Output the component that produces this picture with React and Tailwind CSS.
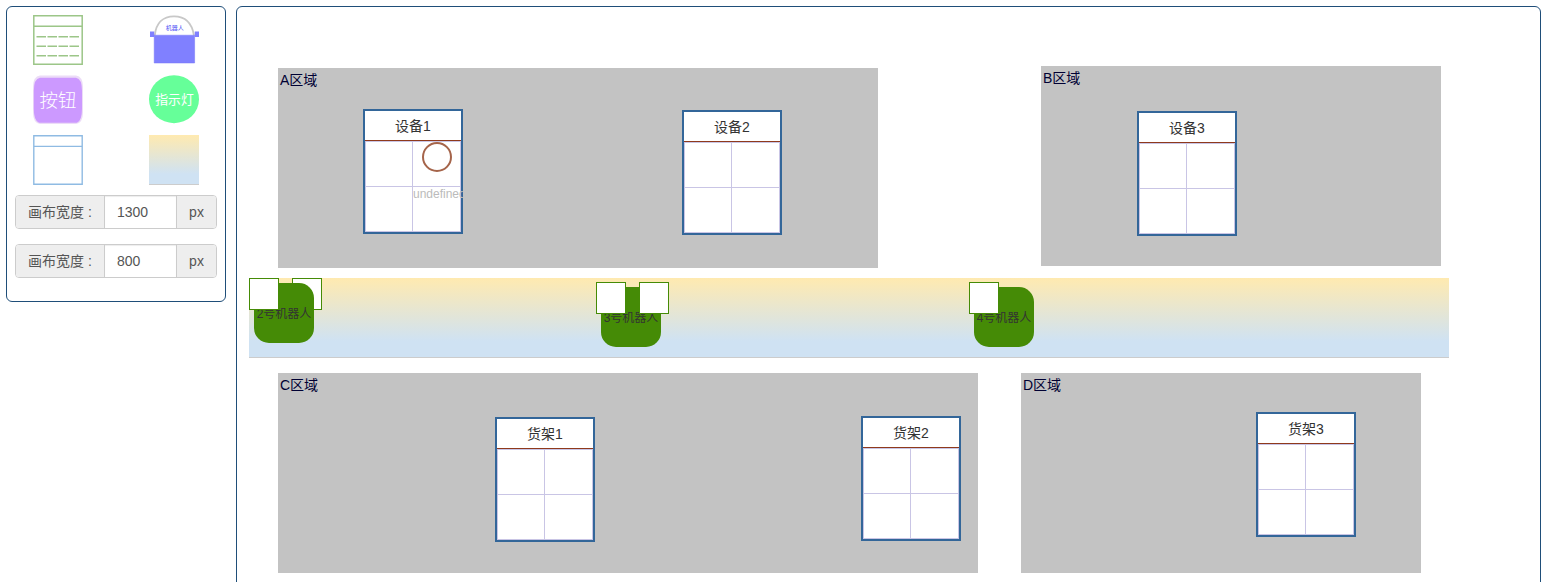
const zones = [
  { name: "A区域", x: 278, y: 68, w: 600 },
  { name: "B区域", x: 1041, y: 66, w: 400 },
  { name: "C区域", x: 278, y: 373, w: 700 },
  { name: "D区域", x: 1021, y: 373, w: 400 },
];

const racks = [
  { name: "设备1", x: 363, y: 109, lamp: true },
  { name: "设备2", x: 682, y: 110 },
  { name: "设备3", x: 1137, y: 111 },
  { name: "货架1", x: 495, y: 417 },
  { name: "货架2", x: 861, y: 416 },
  { name: "货架3", x: 1256, y: 412 },
];

// The canvas starts inside the border of the main panel.
const OX = 237;
const OY = 7;
const at = (x, y) => ({ left: x - OX, top: y - OY });

function Zone({ name, x, y, w }) {
  return (
    <div
      className="absolute h-[200px] bg-[#c3c3c3] pl-0.5 pt-0.5 text-sm leading-5 text-[#000033]"
      style={{ ...at(x, y), width: w }}
    >
      {name}
    </div>
  );
}

function Rack({ name, x, y, lamp }) {
  return (
    <div
      className="absolute flex h-[125px] w-[100px] flex-col border-2 border-[#336699] bg-white"
      style={at(x, y)}
    >
      <div className="flex h-[30px] items-center justify-center border-b border-[#8f3a1c] text-sm leading-5 text-[#333]">
        {name}
      </div>
      <div className="grid h-[91px] grid-cols-[46px_47px] grid-rows-[44px_44px] gap-px border border-[#c9c5e5] bg-[#c9c5e5]">
        <div className="bg-white" />
        <div className="bg-white" />
        <div className="bg-white" />
        <div className="bg-white" />
      </div>
      {lamp && (
        <>
          <div className="absolute left-[57px] top-[31px] size-[30px] rounded-full border-2 border-[#a5644a]" />
          <div className="absolute left-[48px] top-[75px] w-[50px] overflow-hidden text-xs leading-[17px] text-[#bbb]">
            undefined
          </div>
        </>
      )}
    </div>
  );
}

function Hand({ className }) {
  return <div className={"absolute top-0 h-8 w-[30px] border border-[#458b06] bg-white " + className} />;
}

function Robot({ name, x, y, right }) {
  return (
    <div className="absolute h-[65px] w-[73px]" style={at(x, y)}>
      {right === "below" && <Hand className="left-[43px]" />}
      <div className="absolute left-[5px] top-[5px] flex size-[60px] items-center justify-center whitespace-nowrap rounded-[15px] bg-[#458b06] pt-0.5 text-xs text-[#333]">
        {name}
      </div>
      <Hand className="left-0" />
      {right === "above" && <Hand className="left-[43px]" />}
    </div>
  );
}

function TableIcon() {
  return (
    <svg width="50" height="50" fill="none" stroke="#9cc688">
      <path d="M.8 .8h48.4v48.4H.8zM.8 11.3h48.4" strokeWidth="1.5" />
      <path
        d="M3.5 21.7h9.5M14.5 21.7H24M25.5 21.7H35M36.5 21.7H46M3.5 31.3h9.5M14.5 31.3H24M25.5 31.3H35M36.5 31.3H46M3.5 40.7h9.5M14.5 40.7H24M25.5 40.7H35M36.5 40.7H46"
        strokeWidth="1.6"
      />
    </svg>
  );
}

function RobotIcon() {
  return (
    <svg width="50" height="50">
      <path d="M5.8 20.5C7 8 14 1.3 25 1.3S43 8 45 20.5" fill="#fff" stroke="#c8c8c8" strokeWidth="1.8" />
      <path d="M1 16.5h4.2V22H1zM45.8 16.5H50V22h-4.2z" fill="#8080ff" />
      <path d="M5.2 20.2h40.4v27.8H5.2z" fill="#8080ff" stroke="#7474f5" strokeWidth=".5" />
      <text x="25.7" y="15.3" textAnchor="middle" fontSize="6" fill="#5252f5" className="font-['Noto_Sans_CJK_SC',sans-serif]">
        机器人
      </text>
    </svg>
  );
}

function ButtonIcon() {
  return (
    <svg width="50" height="50">
      <path d="M7 .5h36Q50 1.500 50 12v25q0 11-7 12H7Q0 48 0 37V12Q0 1.500 7 .5z" fill="#ecdcf7" />
      <path d="M7 2.700h36q6 1 6 13v18q0 12-5 14H6q-5.200-2-5.200-14v-18q0-12 6.200-13z" fill="#cc99ff" />
      <text x="25" y="31.5" textAnchor="middle" fontSize="18.5" fill="#fff" className="font-['Noto_Sans_CJK_SC',sans-serif] font-light">
        按钮
      </text>
    </svg>
  );
}

function LampIcon() {
  return (
    <svg width="50" height="50">
      <ellipse cx="25" cy="24.2" rx="25" ry="24" fill="#66ff99" />
      <text x="25.5" y="28.7" textAnchor="middle" fontSize="12.8" fill="#fff" className="font-['Noto_Sans_CJK_SC',sans-serif]">
        指示灯
      </text>
    </svg>
  );
}

function ShelfIcon() {
  return (
    <svg width="50" height="50" fill="none" stroke="#8fbbe3" strokeWidth="1.4">
      <path d="M.8 .8h48.4v48.4H.8zM.8 11.4h48.4" />
    </svg>
  );
}

function SizeField({ value }) {
  return (
    <div className="flex h-[34px] w-[202px] overflow-hidden rounded-[4px] border border-[#ccc] text-sm leading-8 text-[#555]">
      <div className="w-[89px] whitespace-pre border-r border-[#ccc] bg-[#eee] pl-3">画布宽度 :</div>
      <input
        className="w-[71px] bg-white pl-3 shadow-[inset_0_1px_1px_rgba(0,0,0,0.075)] outline-none"
        defaultValue={value}
      />
      <div className="flex-1 border-l border-[#ccc] bg-[#eee] text-center">px</div>
    </div>
  );
}

export default function App() {
  return (
    <div className="flex h-[582px] w-[1545px] gap-2.5 overflow-hidden bg-white pl-1.5 pt-1.5 font-['Liberation_Sans','Noto_Sans_CJK_SC',sans-serif]">
      <aside className="flex h-[296px] w-[220px] shrink-0 flex-col rounded-[6px] border border-[#1f4e79] px-2 pt-2">
        <div className="grid grid-cols-[50px_50px] gap-x-[66px] gap-y-2.5 pl-[18px]">
          <TableIcon />
          <RobotIcon />
          <ButtonIcon />
          <LampIcon />
          <ShelfIcon />
          <div className="size-[50px] border-b border-[#ccc] bg-[linear-gradient(#ffeab0,#cfe2f3_80%)]" />
        </div>
        <div className="flex flex-col gap-[15px] pt-2.5">
          <SizeField value="1300" />
          <SizeField value="800" />
        </div>
      </aside>
      <main className="relative h-[802px] w-[1305px] shrink-0 rounded-[6px] border border-[#1f4e79]">
        {zones.map((z) => (
          <Zone key={z.name} {...z} />
        ))}
        <div
          className="absolute h-20 w-[1200px] border-b border-[#ccc] bg-[linear-gradient(#ffeab0,#cfe2f3_80%)]"
          style={at(249, 278)}
        />
        {racks.map((r) => (
          <Rack key={r.name} {...r} />
        ))}
        <Robot name="2号机器人" x={249} y={278} right="below" />
        <Robot name="3号机器人" x={596} y={282} right="above" />
        <Robot name="4号机器人" x={969} y={282} />
      </main>
    </div>
  );
}
